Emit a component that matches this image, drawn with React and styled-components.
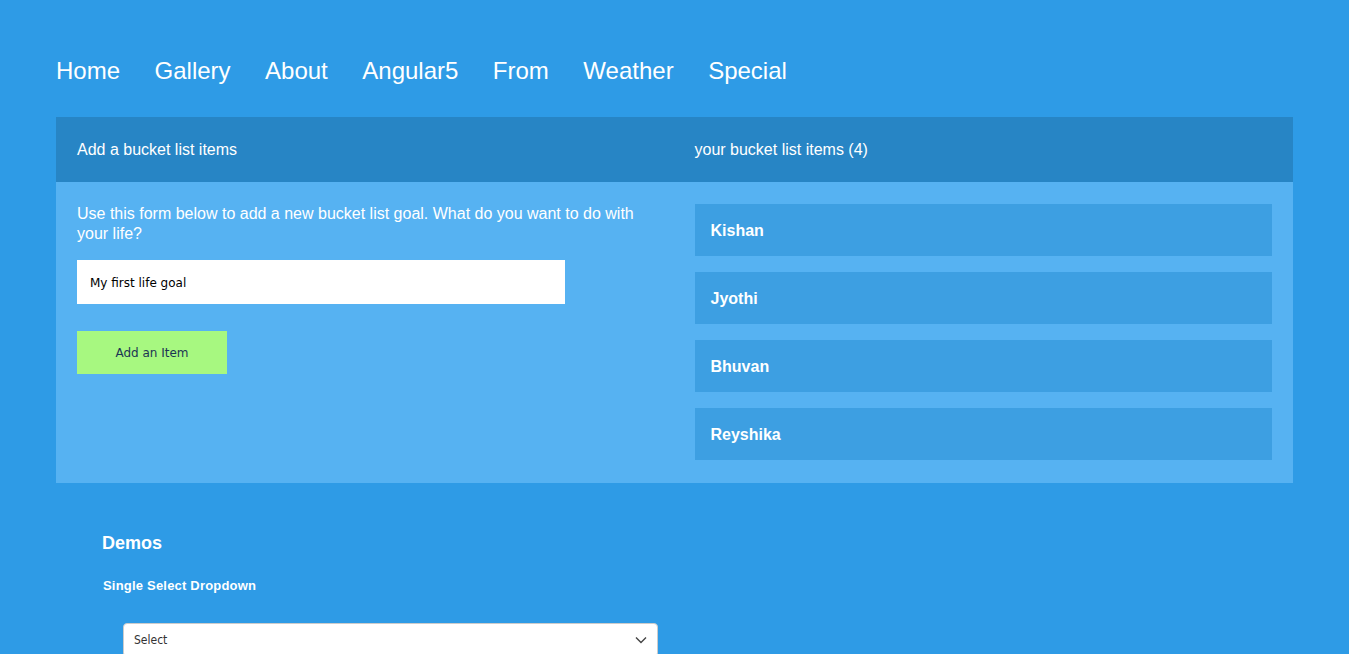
import React, { useState } from "react";
import styled, { createGlobalStyle } from "styled-components";

const GlobalStyle = createGlobalStyle`
  html, body {
    margin: 0;
    padding: 0;
    background-color: #2e9be6;
    font-family: "Liberation Sans", Arial, sans-serif;
    color: #fff;
  }
`;

const Page = styled.div`
  padding: 48px 56px 0 56px;
`;

const Nav = styled.ul`
  list-style: none;
  margin: 0;
  padding: 0;
  display: flex;
  gap: 34.5px;
  height: 69px;
  align-items: flex-start;

  li {
    font-size: 24px;
    line-height: 46px;
    color: #fff;
    cursor: pointer;
  }
`;

const Panel = styled.div`
  display: grid;
  grid-template-columns: 1fr 1fr;
  background-color: #56b2f2;
`;

const PanelHead = styled.div`
  background-color: #2785c5;
  height: 65px;
  display: flex;
  align-items: center;
  padding: 0 21px 0 ${p => (p.right ? "20px" : "21px")};
  font-size: 16px;
`;

const PanelBody = styled.div`
  padding: ${p => (p.list ? "22px 21px 23px 20px" : "22px 21px")};
`;

const Intro = styled.p`
  margin: 0 0 16px 0;
  font-size: 16px;
  line-height: 20px;
`;

const GoalInput = styled.input`
  display: block;
  width: 488px;
  height: 44px;
  box-sizing: border-box;
  border: none;
  outline: none;
  padding: 2px 13px 0 13px;
  font-family: "DejaVu Sans", "Liberation Sans", sans-serif;
  font-size: 12px;
  color: #000;
`;

const AddButton = styled.button`
  margin-top: 27px;
  width: 150px;
  height: 43px;
  padding-top: 2px;
  border: none;
  background-color: #a7f880;
  color: #1c3553;
  font-family: "DejaVu Sans", "Liberation Sans", sans-serif;
  font-size: 12px;
  cursor: pointer;
`;

const ItemList = styled.div`
  display: flex;
  flex-direction: column;
  gap: 16px;
`;

const Item = styled.div`
  height: 52px;
  box-sizing: border-box;
  padding: 2px 16px 0 16px;
  display: flex;
  align-items: center;
  background-color: #3d9fe2;
  font-size: 16px;
  font-weight: bold;
`;

const Demos = styled.section`
  padding: 48px 0 0 46px;
`;

const DemosTitle = styled.h3`
  margin: 0;
  font-size: 18px;
  font-weight: bold;
  line-height: 24px;
`;

const DemoLabel = styled.h5`
  margin: 23px 0 0 1px;
  font-size: 13px;
  font-weight: bold;
  line-height: 16px;
  letter-spacing: 0.2px;
`;

const SelectBox = styled.div`
  margin: 29px 0 0 21px;
  width: 535px;
  height: 34px;
  box-sizing: border-box;
  background: #fff;
  border: 1px solid #ccc;
  border-radius: 4px;
  display: flex;
  align-items: center;
  justify-content: space-between;
  padding: 0 10px;
  color: #333;
  font-family: "DejaVu Sans Condensed", "Liberation Sans", sans-serif;
  font-size: 12px;
`;

const Chevron = () => (
  <svg width="12" height="8" viewBox="0 0 12 8" fill="none">
    <path d="M1 1.5L6 6.5L11 1.5" stroke="#444" strokeWidth="1.4" />
  </svg>
);

const navItems = ["Home", "Gallery", "About", "Angular5", "From", "Weather", "Special"];

const App = () => {
  const [goal, setGoal] = useState("My first life goal");
  const items = ["Kishan", "Jyothi", "Bhuvan", "Reyshika"];

  return (
    <>
      <GlobalStyle />
      <Page>
        <Nav>
          {navItems.map(n => (
            <li key={n}>{n}</li>
          ))}
        </Nav>

        <Panel>
          <PanelHead>Add a bucket list items</PanelHead>
          <PanelHead right>your bucket list items ({items.length})</PanelHead>
          <PanelBody>
            <Intro>
              Use this form below to add a new bucket list goal. What do you want to do with your life?
            </Intro>
            <GoalInput value={goal} onChange={e => setGoal(e.target.value)} />
            <AddButton>Add an Item</AddButton>
          </PanelBody>
          <PanelBody list>
            <ItemList>
              {items.map(i => (
                <Item key={i}>{i}</Item>
              ))}
            </ItemList>
          </PanelBody>
        </Panel>

        <Demos>
          <DemosTitle>Demos</DemosTitle>
          <DemoLabel>Single Select Dropdown</DemoLabel>
          <SelectBox>
            <span>Select</span>
            <Chevron />
          </SelectBox>
        </Demos>
      </Page>
    </>
  );
};

export default App;
